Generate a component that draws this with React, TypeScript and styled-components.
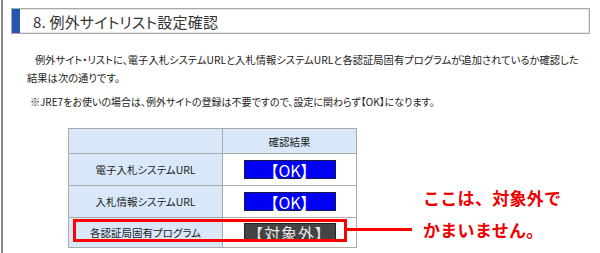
import React from "react";
import styled, { createGlobalStyle } from "styled-components";

const Global = createGlobalStyle`
  html, body { margin: 0; padding: 0; background: #ffffff; }
  body {
    font-family: "Noto Sans CJK JP", "Noto Sans", sans-serif;
    color: #333333;
  }
`;

const Page = styled.div`
  box-sizing: border-box;
  width: 600px;
  height: 253px;
  overflow: hidden;
  margin-left: 1px;
  border-left: 2px solid #8a8a8a;
  padding: 8px 11px 0 8px;
  display: flex;
  flex-direction: column;
`;

const TitleBox = styled.div`
  box-sizing: border-box;
  height: 26px;
  border: 1px solid #a8a8a8;
  box-shadow: inset 0 0 0 1px #e4e4e4;
  display: flex;
  align-items: stretch;
`;

const TitleBar = styled.div`
  width: 8px;
  background: #2356ad;
`;

const TitleText = styled.h1`
  margin: 0;
  padding-left: 13px;
  display: flex;
  align-items: center;
  font-size: 15px;
  font-weight: 400;
  color: #333333;
  font-feature-settings: "palt";
  letter-spacing: 0.2px;
`;

const Lead = styled.p`
  margin: 17px 0 0 16px;
  font-size: 10.3px;
  line-height: 18px;
  text-indent: 8px;
  color: #222222;
  font-feature-settings: "palt";
  white-space: nowrap;
`;

const Note = styled.p`
  margin: 6px 0 0 19px;
  font-size: 10px;
  line-height: 18px;
  color: #222222;
  font-feature-settings: "palt";
  white-space: nowrap;
`;

const Area = styled.div`
  margin: 17px 0 0 57px;
  display: flex;
  align-items: flex-start;
`;

const TableWrap = styled.div`
  position: relative;
`;

const Table = styled.table`
  border-collapse: collapse;
  border: 1px solid #a0a0a0;
  font-size: 10.5px;
  color: #222222;
  font-feature-settings: "palt";
`;

const Cell = styled.td<{ $tone: "blue" | "white"; $w?: number; $h: number }>`
  box-sizing: border-box;
  width: ${(p) => (p.$w ? `${p.$w}px` : "auto")};
  height: ${(p) => p.$h}px;
  padding: 0;
  text-align: center;
  vertical-align: middle;
  border: 1px solid #aaaaaa;
  background: ${(p) => (p.$tone === "blue" ? "#d8e8f9" : "#ffffff")};
`;

const Status = styled.div<{ $kind: "ok" | "na" }>`
  box-sizing: border-box;
  margin: 0 auto;
  width: 92px;
  height: 19px;
  display: flex;
  align-items: center;
  justify-content: center;
  background: ${(p) => (p.$kind === "ok" ? "#0000f5" : "#444444")};
  border: 1px solid ${(p) => (p.$kind === "ok" ? "#1a1a4a" : "#222222")};
  color: ${(p) => (p.$kind === "ok" ? "#ffffff" : "#e6e6e6")};
  font-size: 16px;
  line-height: 1;
  letter-spacing: ${(p) => (p.$kind === "ok" ? "0" : "1px")};
`;

const Highlight = styled.div`
  position: absolute;
  left: 5px;
  top: 91px;
  width: 274px;
  height: 23px;
  box-sizing: border-box;
  border: 3px solid #ff0000;
  pointer-events: none;

  &::after {
    content: "";
    position: absolute;
    left: 271px;
    top: 6px;
    width: 65px;
    height: 3px;
    background: #ff0000;
  }
`;

const Callout = styled.div`
  margin: 54px 0 0 66px;
  font-size: 17px;
  line-height: 32px;
  font-weight: 700;
  color: #ee0000;
  white-space: nowrap;
  letter-spacing: 0.3px;
`;

export default function App() {
  return (
    <>
      <Global />
      <Page>
        <TitleBox>
          <TitleBar />
          <TitleText>8. 例外サイトリスト設定確認</TitleText>
        </TitleBox>
        <Lead>
          例外サイト・リストに、電子入札システムURLと入札情報システムURLと各認証局固有プログラムが追加されているか確認した
          <br />
          結果は次の通りです。
        </Lead>
        <Note>※JRE7をお使いの場合は、例外サイトの登録は不要ですので、設定に関わらず【OK】になります。</Note>
        <Area>
          <TableWrap>
            <Table>
              <tbody>
                <tr>
                  <Cell $tone="blue" $w={154} $h={25}></Cell>
                  <Cell $tone="blue" $w={134} $h={25}>確認結果</Cell>
                </tr>
                <tr>
                  <Cell $tone="blue" $h={32}>電子入札システムURL</Cell>
                  <Cell $tone="white" $h={32}>
                    <Status $kind="ok">【OK】</Status>
                  </Cell>
                </tr>
                <tr>
                  <Cell $tone="blue" $h={32}>入札情報システムURL</Cell>
                  <Cell $tone="white" $h={32}>
                    <Status $kind="ok">【OK】</Status>
                  </Cell>
                </tr>
                <tr>
                  <Cell $tone="blue" $h={30}>各認証局固有プログラム</Cell>
                  <Cell $tone="white" $h={30}>
                    <Status $kind="na">【対象外】</Status>
                  </Cell>
                </tr>
              </tbody>
            </Table>
            <Highlight />
          </TableWrap>
          <Callout>
            ここは、対象外で
            <br />
            かまいません。
          </Callout>
        </Area>
      </Page>
    </>
  );
}
